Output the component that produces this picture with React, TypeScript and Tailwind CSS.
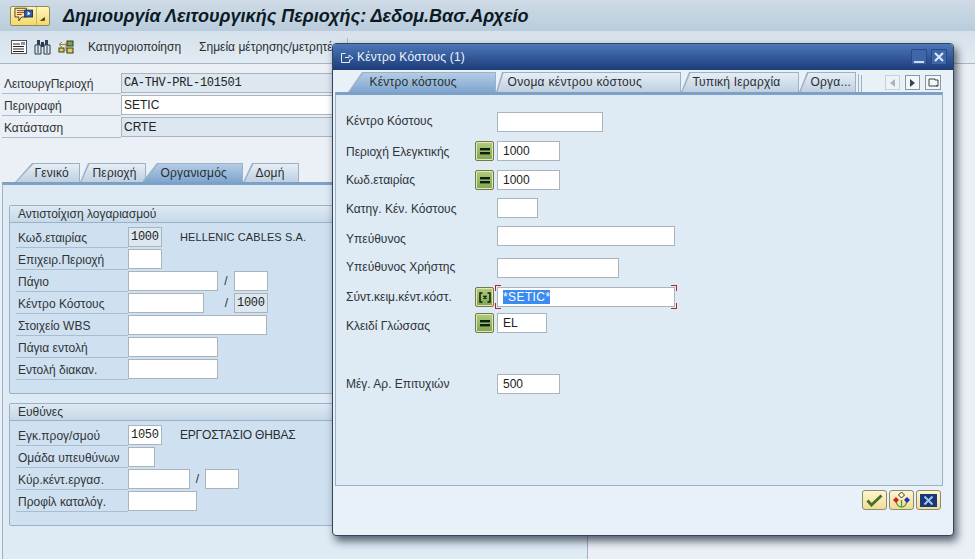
import type { ReactNode } from 'react';

const labelText = 'text-[12px] text-[#2f3336] whitespace-nowrap';

const SLANT = {
  s6: '[clip-path:polygon(6px_0,100%_0,100%_100%,0_100%)]',
  s8: '[clip-path:polygon(8px_0,100%_0,100%_100%,0_100%)]',
  s9: '[clip-path:polygon(9px_0,100%_0,100%_100%,0_100%)]',
  s14: '[clip-path:polygon(14px_0,100%_0,100%_100%,0_100%)]',
  s15: '[clip-path:polygon(15px_0,100%_0,100%_100%,0_100%)]',
  s17: '[clip-path:polygon(17px_0,100%_0,100%_100%,0_100%)]',
};

function Field({ className, value, read, mono }: { className: string; value?: string; read?: boolean; mono?: boolean }) {
  return (
    <div
      className={`h-[20px] shrink-0 overflow-hidden whitespace-nowrap border border-[#aab4bd] px-[2px] leading-[18px] text-[#222] ${
        read ? 'bg-[#dde7f0]' : 'bg-white'
      } ${mono ? 'font-["Liberation_Mono",monospace] text-[12px] tracking-[-0.3px]' : 'text-[12px]'} ${className}`}
    >
      {value}
    </div>
  );
}

function Row({ label, children }: { label: string; children?: ReactNode }) {
  return (
    <div className="flex h-[22px] items-center">
      <div className={`h-[21px] w-[112px] shrink-0 border-b border-[#aabdce] pl-[2px] leading-[23px] ${labelText}`}>{label}</div>
      {children}
    </div>
  );
}

function HeaderRow({ label, children }: { label: string; children: ReactNode }) {
  return (
    <div className="flex h-[22px] items-center">
      <div className={`h-[21px] w-[119px] shrink-0 border-b border-[#aabdce] pl-[2px] leading-[22px] ${labelText}`}>{label}</div>
      {children}
    </div>
  );
}

function Tab({ label, shape, className, pad, active, tall }: { label: string; shape: string; className: string; pad: string; active?: boolean; tall?: boolean }) {
  return (
    <div className={`relative shrink-0 bg-[#9db1c6] ${tall ? 'h-[20px]' : 'h-[19px]'} ${shape} ${className}`}>
      <div
        className={`absolute bottom-0 left-[1.500px] right-[1px] top-[1px] text-[12px] tracking-[0.2px] text-[#2a2e31] whitespace-nowrap ${
          tall ? 'leading-[19px]' : 'leading-[18px]'
        } ${shape} ${pad} ${active ? 'bg-gradient-to-b from-[#b4cce4] to-[#7ea6cf]' : 'bg-gradient-to-b from-[#e6eef5] to-[#bed0e1]'}`}
      >
        {label}
      </div>
    </div>
  );
}

function Group({ title, className, children }: { title: string; className: string; children: ReactNode }) {
  return (
    <div className={`w-[560px] rounded-[2px] border border-[#9db1c6] bg-[#cfe1f0] ${className}`}>
      <div className={`h-[17px] border-b border-[#9db1c6] bg-gradient-to-b from-[#dde9f3] to-[#c6d9e9] pl-[8px] leading-[16px] ${labelText}`}>{title}</div>
      <div className="pl-[6px] pt-[3px]">{children}</div>
    </div>
  );
}

function MatchButton({ range }: { range?: boolean }) {
  return (
    <div className="flex h-[20px] w-[19px] shrink-0 items-center justify-center rounded-[2px] border border-[#6f7a4d] bg-gradient-to-b from-[#b1cd7e] to-[#7fa650] shadow-[inset_0_0_0_1px_#e8e4b8]">
      {range ? (
        <svg width="12" height="11" viewBox="0 0 12 11" fill="none" stroke="#0c1f10" strokeWidth="1.500">
          <path d="M3.500 1H1v9h2.500M8.500 1H11v9H8.500M4.500 3.800l3 3M7.500 3.800l-3 3" />
        </svg>
      ) : (
        <svg width="12" height="7" viewBox="0 0 12 7" fill="#0c1f10">
          <rect x="1" y="0" width="10" height="2.400" />
          <rect x="1" y="4" width="10" height="2.400" />
        </svg>
      )}
    </div>
  );
}

function DialogRow({ label, className, labelClass = '', children }: { label: string; className: string; labelClass?: string; children: ReactNode }) {
  return (
    <div className={`flex h-[20px] items-center ${className}`}>
      <div className={`w-[129px] shrink-0 ${labelText} ${labelClass}`}>{label}</div>
      {children}
    </div>
  );
}

function FooterButton({ children }: { children: ReactNode }) {
  return (
    <div className="flex h-[20px] w-[25px] items-center justify-center rounded-[3px] border border-[#8d8a72] bg-gradient-to-b from-[#fdf6d0] to-[#f0dc96]">
      {children}
    </div>
  );
}

function Corner({ className }: { className: string }) {
  return <div className={`absolute h-[6px] w-[6px] border-[#b3202f] ${className}`} />;
}

export default function App() {
  return (
    <div className="relative h-[559px] w-[975px] overflow-hidden bg-[#eaf0f5] font-['Liberation_Sans',sans-serif]">
      {/* title bar */}
      <div className="flex h-[31px] items-center bg-gradient-to-b from-[#cfdbe6] to-[#b9ccdc] pl-[10px]">
        <div className="flex h-[20px] w-[40px] items-center rounded-[2px] border border-[#8f8a60] bg-gradient-to-b from-[#fff6b8] to-[#f3d86a]">
          <svg width="24" height="17" viewBox="0 0 24 17" className="ml-[2px]">
            <path d="M2 1h12v9H9l-3 4v-4H2z" fill="#f6ecb0" stroke="#4a4020" />
            <path d="M4 3.500h8M4 5.500h8M4 7.500h5" stroke="#a03a20" />
            <rect x="12" y="3" width="8" height="7" fill="#2f5fb0" stroke="#1c2f60" />
            <path d="M15 4.500l3 2-3 2z" fill="#fff" />
          </svg>
          <div className="h-full w-px bg-[#c9b768]" />
          <svg width="12" height="16" viewBox="0 0 12 16"><path d="M3 13h5V9z" fill="#333" /></svg>
        </div>
        <div className="ml-[13px] text-[18px] font-bold italic leading-[20px] text-[#0c1a24] whitespace-nowrap">
          Δημιουργία Λειτουργικής Περιοχής: Δεδομ.Βασ.Αρχείο
        </div>
      </div>

      {/* application toolbar */}
      <div className="flex h-[33px] items-center border-b border-[#a8b7c4] bg-gradient-to-b from-[#d5e1eb] to-[#e2ebf3] pl-[11px] text-[12px] text-[#2a2e31]">
        <svg width="16" height="16" viewBox="0 0 16 16">
          <rect x="0.500" y="1.500" width="15" height="13" fill="#fff" stroke="#555" />
          <path d="M2 5h7M2 7.500h11M2 10h11M2 12.500h11" stroke="#222" />
          <rect x="10" y="3" width="4" height="3" fill="#8a98a8" />
        </svg>
        <svg width="17" height="16" viewBox="0 0 17 16" className="ml-[7px]">
          <path d="M3 1h3v5H3zM11 1h3v5h-3z" fill="#2b3f55" />
          <path d="M1 6h6v9H1zM10 6h6v9h-6z" fill="#dfe7ee" stroke="#26384c" />
          <path d="M7 3h3v5H7z" fill="#26384c" />
          <path d="M4 7v7M13 7v7" stroke="#26384c" />
        </svg>
        <svg width="16" height="16" viewBox="0 0 16 16" className="ml-[7px]">
          <path d="M4 3 1 5.500 4 8M2 5.500h6M8 4v8h1" fill="none" stroke="#b08020" />
          <rect x="9" y="2" width="6" height="5" fill="#7aa050" stroke="#2c3e20" />
          <rect x="9" y="9" width="6" height="5" fill="#e8c860" stroke="#2c3e20" />
          <rect x="1" y="9" width="5" height="4" fill="#e8c860" stroke="#2c3e20" />
        </svg>
        <span className="ml-[14px] whitespace-nowrap">Κατηγοριοποίηση</span>
        <span className="ml-[18px] whitespace-nowrap">Σημεία μέτρησης/μετρητές</span>
        <div className="ml-[9px] h-[18px] w-px bg-[#a8b7c4]" />
      </div>

      {/* header fields */}
      <div className="pl-[2px] pt-[8px]">
        <HeaderRow label="ΛειτουργΠεριοχή"><Field className="w-[300px]" value="CA-THV-PRL-101501" read mono /></HeaderRow>
        <HeaderRow label="Περιγραφή"><Field className="w-[300px]" value="SETIC" /></HeaderRow>
        <HeaderRow label="Κατάσταση"><Field className="w-[300px]" value="CRTE" read /></HeaderRow>
      </div>

      {/* tabstrip */}
      <div className="mt-[25px] flex pl-[15px]">
        <Tab label="Γενικό" shape={SLANT.s17} className="w-[65px]" pad="pl-[18px]" />
        <Tab label="Περιοχή" shape={SLANT.s8} className="w-[66px]" pad="pl-[11px]" />
        <Tab label="Οργανισμός" shape={SLANT.s15} className="z-10 ml-[-4px] w-[101px]" pad="pl-[17px]" active />
        <Tab label="Δομή" shape={SLANT.s9} className="w-[56px]" pad="pl-[11px]" />
      </div>
      <div className="ml-[2px] h-[377px] w-[586px] border-x border-t-[3px] border-[#9db1c6] border-t-[#7ea0c6] bg-[#deeaf4] pl-[6px] pt-[20px]">
        <Group title="Αντιστοίχιση λογαριασμού" className="h-[189px]">
          <Row label="Κωδ.εταιρίας">
            <Field className="w-[34px]" value="1000" read mono />
            <span className="ml-[18px] text-[11px] tracking-[0.1px] text-[#2a2e31] whitespace-nowrap">HELLENIC CABLES S.A.</span>
          </Row>
          <Row label="Επιχειρ.Περιοχή"><Field className="w-[34px]" /></Row>
          <Row label="Πάγιο">
            <Field className="w-[90px]" />
            <span className="w-[16px] text-center text-[12px] text-[#2a2e31]">/</span>
            <Field className="w-[34px]" />
          </Row>
          <Row label="Κέντρο Κόστους">
            <Field className="w-[76px]" />
            <span className="w-[30px] pr-[6px] text-right text-[12px] text-[#2a2e31]">/</span>
            <Field className="w-[34px]" value="1000" read mono />
          </Row>
          <Row label="Στοιχείο WBS"><Field className="w-[139px]" /></Row>
          <Row label="Πάγια εντολή"><Field className="w-[90px]" /></Row>
          <Row label="Εντολή διακαν."><Field className="w-[90px]" /></Row>
        </Group>
        <Group title="Ευθύνες" className="mt-[9px] h-[123px]">
          <Row label="Εγκ.προγ/σμού">
            <Field className="w-[34px]" value="1050" mono />
            <span className="ml-[18px] text-[12px] tracking-[-0.2px] text-[#2a2e31] whitespace-nowrap">ΕΡΓΟΣΤΑΣΙΟ ΘΗΒΑΣ</span>
          </Row>
          <Row label="Ομάδα υπευθύνων"><Field className="w-[27px]" /></Row>
          <Row label="Κύρ.κέντ.εργασ.">
            <Field className="w-[62px]" />
            <span className="w-[15px] text-center text-[12px] text-[#2a2e31]">/</span>
            <Field className="w-[34px]" />
          </Row>
          <Row label="Προφίλ καταλόγ."><Field className="w-[69px]" /></Row>
        </Group>
      </div>

      {/* dialog window */}
      <div className="absolute left-[332px] top-[43px] h-[493px] w-[622px] rounded-[4px] border border-[#34465c] bg-[#e8f0f8] shadow-[3px_5px_8px_rgba(20,30,50,0.7)]">
        <div className="flex h-[26px] items-center rounded-t-[3px] bg-gradient-to-b from-[#4d78b8] to-[#1d3c7a] pl-[7px]">
          <svg width="15" height="13" viewBox="0 0 15 13" fill="none" stroke="#e6eef8">
            <path d="M5.500 2.500h-4v9h8v-3" />
            <path d="M5 6.500h4V4l4 3-4 3" />
          </svg>
          <span className="ml-[2px] text-[12px] tracking-[0.2px] text-[#eef4fb] whitespace-nowrap">Κέντρο Κόστους (1)</span>
          <div className="ml-auto mr-[6px] flex gap-[4px]">
            <div className="flex h-[16px] w-[16px] items-end justify-center rounded-[1px] border border-[#2a4a85] bg-[#3f66a8] pb-[1px]">
              <div className="h-[2px] w-[10px] bg-[#cfdcf0]" />
            </div>
            <div className="flex h-[16px] w-[16px] items-center justify-center rounded-[1px] border border-[#2a4a85] bg-[#3f66a8]">
              <svg width="10" height="10" viewBox="0 0 10 10" stroke="#dbe6f5" strokeWidth="2.200"><path d="M1 1l8 8M9 1 1 9" /></svg>
            </div>
          </div>
        </div>

        <div className="flex h-[22px] items-end pl-[15px]">
          <Tab label="Κέντρο κόστους" shape={SLANT.s14} className="w-[148px]" pad="pl-[20px]" active tall />
          <Tab label="Ονομα κέντρου κόστους" shape={SLANT.s6} className="w-[185px]" pad="pl-[10px] tracking-[0.3px]" tall />
          <Tab label="Τυπική Ιεραρχία" shape={SLANT.s8} className="w-[118px]" pad="pl-[10px]" tall />
          <Tab label="Οργα..." shape={SLANT.s8} className="w-[57px]" pad="pl-[10px]" tall />
          <div className="ml-[1px] h-[18px] w-[2px] border-r border-[#9db1c6]" />
          <div className="ml-[1px] h-[17px] w-[2px] border-r border-[#9db1c6]" />
          <div className="mb-[2px] ml-[23px] flex gap-[5px]">
            <div className="flex h-[15px] w-[15px] items-center justify-center border border-[#c5d0da] bg-[#eef3f8]">
              <svg width="5" height="8" viewBox="0 0 5 8"><path d="M5 0v8L0 4z" fill="#a9b4bd" /></svg>
            </div>
            <div className="flex h-[15px] w-[15px] items-center justify-center border border-[#8a98a6] bg-[#f4f7fa]">
              <svg width="5" height="8" viewBox="0 0 5 8"><path d="M0 0v8l5-4z" fill="#37444f" /></svg>
            </div>
            <div className="flex h-[15px] w-[16px] items-center justify-center border border-[#8a98a6] bg-[#f4f7fa]">
              <svg width="11" height="11" viewBox="0 0 11 11" fill="none" stroke="#37444f"><path d="M1 2h6v1h3v6H9M1 2v7h8M8 8l1.500 1.500" /></svg>
            </div>
          </div>
        </div>

        <div className="ml-[2px] mr-[10px] h-[394px] border border-t-[3px] border-[#9db1c6] border-t-[#7ea0c6] bg-[#deeaf4] pl-[10px] pt-[17px]">
          <DialogRow label="Κέντρο Κόστους" className="" labelClass="mb-[2px]"><div className="w-[22px]" /><Field className="w-[106px] px-[5px]" /></DialogRow>
          <DialogRow label="Περιοχή Ελεγκτικής" className="mt-[9px]" labelClass="mt-[2px]"><MatchButton /><div className="w-[3px]" /><Field className="w-[63px] px-[5px]" value="1000" /></DialogRow>
          <DialogRow label="Κωδ.εταιρίας" className="mt-[9px]"><MatchButton /><div className="w-[3px]" /><Field className="w-[63px] px-[5px]" value="1000" /></DialogRow>
          <DialogRow label="Κατηγ. Κέν. Κόστους" className="mt-[8px]" labelClass="mt-[2px]"><div className="w-[22px]" /><Field className="w-[41px]" /></DialogRow>
          <DialogRow label="Υπεύθυνος" className="mt-[8px]" labelClass="mt-[6px]"><div className="w-[22px]" /><Field className="w-[178px]" /></DialogRow>
          <DialogRow label="Υπεύθυνος Χρήστης" className="mt-[12px]" labelClass="mb-[2px]"><div className="w-[22px]" /><Field className="w-[122px]" /></DialogRow>
          <DialogRow label="Σύντ.κειμ.κέντ.κόστ." className="mt-[9px]">
            <MatchButton range />
            <div className="w-[3px]" />
            <div className="relative">
              <div className="h-[20px] w-[178px] border border-[#aab4bd] bg-white px-[5px] text-[12px] leading-[18px]">
                <span className="bg-[#3b8bf0] tracking-[0.4px] text-white">*SETIC*</span>
              </div>
              <Corner className="-left-[2px] -top-[2px] border-l border-t" />
              <Corner className="-right-[2px] -top-[2px] border-r border-t" />
              <Corner className="-bottom-[2px] -left-[2px] border-b border-l" />
              <Corner className="-bottom-[2px] -right-[2px] border-b border-r" />
            </div>
          </DialogRow>
          <DialogRow label="Κλειδί Γλώσσας" className="mt-[6px]" labelClass="mt-[6px]"><MatchButton /><div className="w-[3px]" /><Field className="w-[50px] px-[5px]" value="EL" /></DialogRow>
          <DialogRow label="Μέγ. Αρ. Επιτυχιών" className="mt-[41px]"><div className="w-[22px]" /><Field className="w-[63px] px-[5px]" value="500" /></DialogRow>
        </div>

        <div className="mr-[12px] mt-[4px] flex justify-end gap-[2px]">
          <FooterButton>
            <svg width="17" height="13" viewBox="0 0 17 13" fill="none">
              <path d="M1.500 6.500l4 4.500L15.500 1.500" stroke="#47701f" strokeWidth="2.800" />
            </svg>
          </FooterButton>
          <FooterButton>
            <svg width="19" height="17" viewBox="0 0 19 17">
              <path d="M9.500 8v7M4.500 10c0 3 2.500 5 5 5s5-2 5-5" fill="none" stroke="#3a9a30" strokeWidth="1.200" />
              <path d="M9.500 0l3 3-3 3-3-3z" fill="#fff8c8" stroke="#333" />
              <path d="M4 5l3 3-3 3-3-3z" fill="#d02020" />
              <path d="M15 5l3 3-3 3-3-3z" fill="#2030c0" />
            </svg>
          </FooterButton>
          <FooterButton>
            <div className="flex h-[13px] w-[17px] items-center justify-center bg-[#17397a]">
              <svg width="9" height="9" viewBox="0 0 9 9" stroke="#a8c6ec" strokeWidth="2"><path d="M0.500 0.500l8 8M8.500 0.500l-8 8" /></svg>
            </div>
          </FooterButton>
        </div>
      </div>
    </div>
  );
}
